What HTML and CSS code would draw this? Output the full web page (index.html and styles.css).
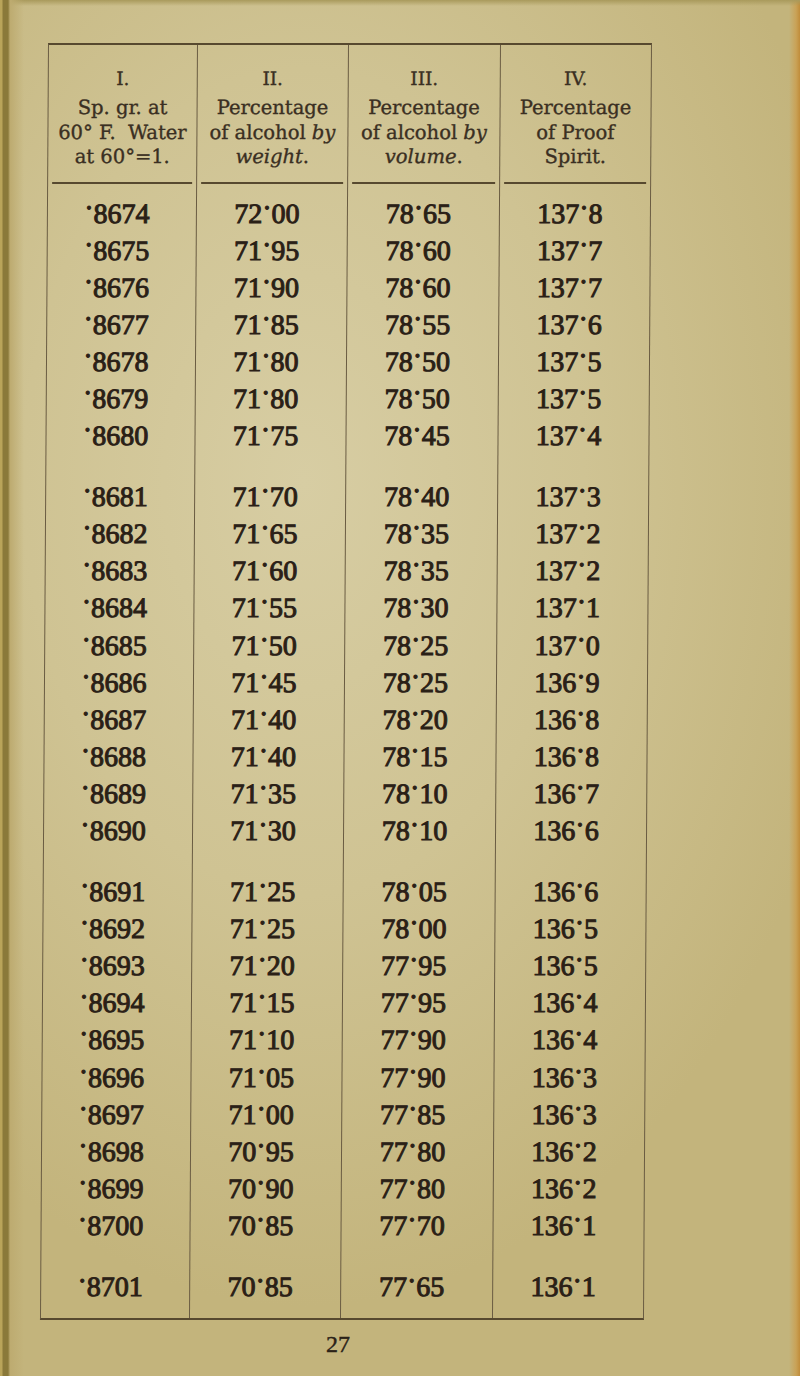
FILE: index.html
```html
<!DOCTYPE html>
<html lang="en">
<head>
<meta charset="utf-8">
<title>Table, page 27</title>
<link rel="stylesheet" href="styles.css">
</head>
<body>
<div class="page">
  <table class="tbl">
    <colgroup><col class="c1"><col class="c2"><col class="c3"><col class="c4"></colgroup>
    <thead>
      <tr>
        <th><div class="rn">I.</div><div class="cap">Sp. gr. at<br>60° F.&nbsp; Water<br>at 60°=1.</div></th>
        <th><div class="rn">II.</div><div class="cap">Percentage<br>of alcohol <i>by</i><br><i>weight</i>.</div></th>
        <th><div class="rn">III.</div><div class="cap">Percentage<br>of alcohol <i>by</i><br><i>volume</i>.</div></th>
        <th><div class="rn">IV.</div><div class="cap">Percentage<br>of Proof<br>Spirit.</div></th>
      </tr>
    </thead>
    <tbody>
      <tr class="first"><td><span class="pt">·</span>8674</td><td>72<span class="pt">·</span>00</td><td>78<span class="pt">·</span>65</td><td>137<span class="pt">·</span>8</td></tr>
      <tr><td><span class="pt">·</span>8675</td><td>71<span class="pt">·</span>95</td><td>78<span class="pt">·</span>60</td><td>137<span class="pt">·</span>7</td></tr>
      <tr><td><span class="pt">·</span>8676</td><td>71<span class="pt">·</span>90</td><td>78<span class="pt">·</span>60</td><td>137<span class="pt">·</span>7</td></tr>
      <tr><td><span class="pt">·</span>8677</td><td>71<span class="pt">·</span>85</td><td>78<span class="pt">·</span>55</td><td>137<span class="pt">·</span>6</td></tr>
      <tr><td><span class="pt">·</span>8678</td><td>71<span class="pt">·</span>80</td><td>78<span class="pt">·</span>50</td><td>137<span class="pt">·</span>5</td></tr>
      <tr><td><span class="pt">·</span>8679</td><td>71<span class="pt">·</span>80</td><td>78<span class="pt">·</span>50</td><td>137<span class="pt">·</span>5</td></tr>
      <tr><td><span class="pt">·</span>8680</td><td>71<span class="pt">·</span>75</td><td>78<span class="pt">·</span>45</td><td>137<span class="pt">·</span>4</td></tr>
      <tr class="brk"><td><span class="pt">·</span>8681</td><td>71<span class="pt">·</span>70</td><td>78<span class="pt">·</span>40</td><td>137<span class="pt">·</span>3</td></tr>
      <tr><td><span class="pt">·</span>8682</td><td>71<span class="pt">·</span>65</td><td>78<span class="pt">·</span>35</td><td>137<span class="pt">·</span>2</td></tr>
      <tr><td><span class="pt">·</span>8683</td><td>71<span class="pt">·</span>60</td><td>78<span class="pt">·</span>35</td><td>137<span class="pt">·</span>2</td></tr>
      <tr><td><span class="pt">·</span>8684</td><td>71<span class="pt">·</span>55</td><td>78<span class="pt">·</span>30</td><td>137<span class="pt">·</span>1</td></tr>
      <tr><td><span class="pt">·</span>8685</td><td>71<span class="pt">·</span>50</td><td>78<span class="pt">·</span>25</td><td>137<span class="pt">·</span>0</td></tr>
      <tr><td><span class="pt">·</span>8686</td><td>71<span class="pt">·</span>45</td><td>78<span class="pt">·</span>25</td><td>136<span class="pt">·</span>9</td></tr>
      <tr><td><span class="pt">·</span>8687</td><td>71<span class="pt">·</span>40</td><td>78<span class="pt">·</span>20</td><td>136<span class="pt">·</span>8</td></tr>
      <tr><td><span class="pt">·</span>8688</td><td>71<span class="pt">·</span>40</td><td>78<span class="pt">·</span>15</td><td>136<span class="pt">·</span>8</td></tr>
      <tr><td><span class="pt">·</span>8689</td><td>71<span class="pt">·</span>35</td><td>78<span class="pt">·</span>10</td><td>136<span class="pt">·</span>7</td></tr>
      <tr><td><span class="pt">·</span>8690</td><td>71<span class="pt">·</span>30</td><td>78<span class="pt">·</span>10</td><td>136<span class="pt">·</span>6</td></tr>
      <tr class="brk"><td><span class="pt">·</span>8691</td><td>71<span class="pt">·</span>25</td><td>78<span class="pt">·</span>05</td><td>136<span class="pt">·</span>6</td></tr>
      <tr><td><span class="pt">·</span>8692</td><td>71<span class="pt">·</span>25</td><td>78<span class="pt">·</span>00</td><td>136<span class="pt">·</span>5</td></tr>
      <tr><td><span class="pt">·</span>8693</td><td>71<span class="pt">·</span>20</td><td>77<span class="pt">·</span>95</td><td>136<span class="pt">·</span>5</td></tr>
      <tr><td><span class="pt">·</span>8694</td><td>71<span class="pt">·</span>15</td><td>77<span class="pt">·</span>95</td><td>136<span class="pt">·</span>4</td></tr>
      <tr><td><span class="pt">·</span>8695</td><td>71<span class="pt">·</span>10</td><td>77<span class="pt">·</span>90</td><td>136<span class="pt">·</span>4</td></tr>
      <tr><td><span class="pt">·</span>8696</td><td>71<span class="pt">·</span>05</td><td>77<span class="pt">·</span>90</td><td>136<span class="pt">·</span>3</td></tr>
      <tr><td><span class="pt">·</span>8697</td><td>71<span class="pt">·</span>00</td><td>77<span class="pt">·</span>85</td><td>136<span class="pt">·</span>3</td></tr>
      <tr><td><span class="pt">·</span>8698</td><td>70<span class="pt">·</span>95</td><td>77<span class="pt">·</span>80</td><td>136<span class="pt">·</span>2</td></tr>
      <tr><td><span class="pt">·</span>8699</td><td>70<span class="pt">·</span>90</td><td>77<span class="pt">·</span>80</td><td>136<span class="pt">·</span>2</td></tr>
      <tr><td><span class="pt">·</span>8700</td><td>70<span class="pt">·</span>85</td><td>77<span class="pt">·</span>70</td><td>136<span class="pt">·</span>1</td></tr>
      <tr class="last"><td><span class="pt">·</span>8701</td><td>70<span class="pt">·</span>85</td><td>77<span class="pt">·</span>65</td><td>136<span class="pt">·</span>1</td></tr>
    </tbody>
  </table>
  <div class="folio">27</div>
</div>
</body>
</html>
```
FILE: styles.css
```css
html, body {
  margin: 0;
  padding: 0;
}
body {
  width: 800px;
  height: 1376px;
  overflow: hidden;
  font-family: "Liberation Serif", "Times New Roman", serif;
  color: #2a2218;
  background:
    linear-gradient(to right, #b9a45a 0, #b9a45a 2px, #8a793a 3px, #8a793a 8px, #bdab70 10px, rgba(200, 186, 134, 0) 24px),
    linear-gradient(to bottom, #a99a5c 0, rgba(169, 154, 92, 0) 6px),
    linear-gradient(to left, #c08c3a 0, #c9a257 4px, rgba(201, 162, 87, 0) 11px),
    radial-gradient(ellipse 70% 60% at 38% 35%, #d7cda3 0%, #cfc393 50%, #c3b47c 100%);
}
.page {
  padding: 43px 0 0 48px;
}
.tbl {
  border-collapse: separate;
  border-spacing: 0;
  table-layout: fixed;
  width: 604px;
  border-top: 2px solid #57492f;
  border-bottom: 2px solid #57492f;
  border-left: 1px solid #6a5c42;
  border-right: 1px solid #6a5c42;
  transform: skewX(-0.36deg);
  transform-origin: 0 0;
}
.c1 { width: 148px; }
.c2 { width: 151px; }
.c3 { width: 152px; }
.c4 { width: 151px; }
th {
  vertical-align: top;
  padding: 21.5px 0 0;
  font-family: "DejaVu Serif", "Liberation Serif", serif;
  font-weight: normal;
  color: #3a2f22;
  text-align: center;
  -webkit-text-stroke: 0.35px #3a2f22;
}
th + th, td + td {
  border-left: 1px solid #6a5c42;
}
.rn {
  font-size: 18.5px;
  line-height: 24px;
  margin-bottom: 5.5px;
}
.cap {
  font-size: 19.5px;
  line-height: 24.5px;
  white-space: nowrap;
}
.cap i {
  font-style: italic;
}
th::after {
  content: "";
  display: block;
  margin: 12.5px 4px 0;
  border-top: 2px solid #57492f;
  -webkit-text-stroke: 0;
}
td {
  font-size: 28px;
  line-height: 37.1px;
  padding: 0 10px 0 0;
  text-align: center;
  white-space: nowrap;
  color: #2a2016;
  -webkit-text-stroke: 1px #2a2016;
}
.pt {
  vertical-align: 0.2em;
  line-height: 0;
}
tr.first td { padding-top: 10.5px; }
tr.brk td { padding-top: 24px; }
tr.last td { padding-top: 24px; padding-bottom: 13px; }
.folio {
  width: 580px;
  margin-top: 12px;
  text-align: center;
  font-size: 24px;
  line-height: 24px;
  color: #2a2218;
  -webkit-text-stroke: 0.4px #2a2218;
}
```
